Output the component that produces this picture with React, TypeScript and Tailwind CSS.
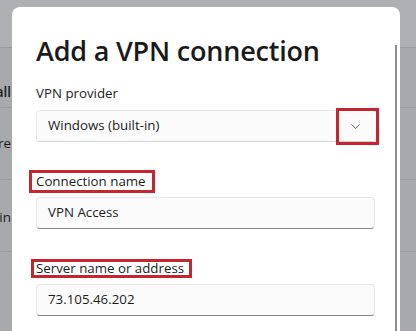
import React from 'react';

const font = { fontFamily: '"Open Sans", "Noto Sans", Arial, sans-serif' };

function BgRow({ h, text, bold }: { h: string; text?: string; bold?: boolean }) {
  return (
    <div className={`flex border-b border-[#98999c] ${h}`}>
      <div className="w-[11px] overflow-hidden flex justify-end items-center">
        {text && (
          <span
            className={`whitespace-nowrap text-[13.5px] text-[#1c1c1c] ${bold ? 'font-semibold' : ''}`}
          >
            {text}
          </span>
        )}
      </div>
    </div>
  );
}

function RedLabel({ children, box }: { children: React.ReactNode; box: string }) {
  return (
    <div className="relative text-[13.3px] leading-[20px] text-[#1b1b1b]">
      {children}
      <span className={`absolute border-[3px] border-[#c3262e] ${box}`} />
    </div>
  );
}

export default function App() {
  return (
    <div className="relative w-[416px] h-[331px] overflow-hidden bg-[#a8a9ac]" style={font}>
      {/* settings list behind the dialog */}
      <div className="flex flex-col">
        <div className="h-[48px] bg-[#afb0b3] border-b border-[#98999c]" />
        <BgRow h="h-[60px] pt-[30px]" text="Install" bold />
        <BgRow h="h-[72px]" text="Where" />
        <BgRow h="h-[72px] pt-[4px]" text="Admin" />
        <BgRow h="h-[80px]" />
      </div>

      {/* dialog */}
      <div className="absolute left-[12px] top-[7px] w-[388px] h-[330px] bg-white rounded-t-[8px] px-[24px]">
        <h1 className="pt-[25px] text-[27px] leading-[38px] font-semibold text-[#1a1a1a] tracking-[-0.2px]">
          Add a VPN connection
        </h1>

        <div className="mt-[13px] text-[13.3px] leading-[20px] text-[#1b1b1b]">VPN provider</div>
        <div className="relative mt-[7px] h-[32px] w-[341px] flex items-center justify-between rounded-[4px] border border-[#e6e6e6] border-b-[#d2d2d2] bg-[#fbfbfb] pl-[11px] pr-[14px]">
          <span className="text-[13.3px] text-[#1b1b1b]">Windows (built-in)</span>
          <svg width="9" height="5" viewBox="0 0 9 5" className="mr-[2px]">
            <path d="M0.5 0.5 L4.5 4.5 L8.5 0.5" fill="none" stroke="#5f5f5f" strokeWidth="1" />
          </svg>
          <span className="absolute left-[299px] -top-[3px] w-[43px] h-[37px] border-[3px] border-[#c3262e]" />
        </div>

        <div className="mt-[29px] flex">
          <RedLabel box="-left-[7px] -right-[9px] -top-[1px] -bottom-[2px]">Connection name</RedLabel>
        </div>
        <div className="mt-[6px] h-[32px] w-[339px] flex items-center rounded-[4px] border border-[#e6e6e6] border-b-[#868686] bg-[#fbfbfb] px-[11px]">
          <span className="text-[13.3px] text-[#1b1b1b]">VPN Access</span>
        </div>

        <div className="mt-[29px] flex">
          <RedLabel box="-left-[5px] -right-[8px] top-[1px] bottom-0">Server name or address</RedLabel>
        </div>
        <div className="mt-[6px] h-[32px] w-[339px] flex items-center rounded-[4px] border border-[#e6e6e6] border-b-[#868686] bg-[#fbfbfb] px-[11px]">
          <span className="text-[13.3px] text-[#1b1b1b]">73.105.46.202</span>
        </div>

        {/* scrollbar */}
        <div className="absolute left-[383px] top-[38px] bottom-0 w-[2px] bg-[#8c8c8c]" />
      </div>
    </div>
  );
}
